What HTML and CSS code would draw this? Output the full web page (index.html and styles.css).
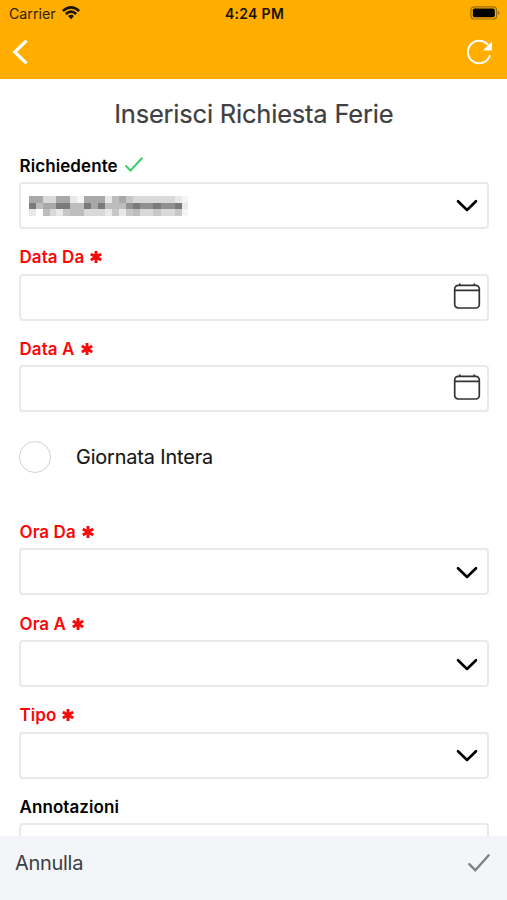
FILE: index.html
```
<!DOCTYPE html>
<html lang="it">
<head>
<meta charset="utf-8">
<title>Inserisci Richiesta Ferie</title>
<link rel="stylesheet" href="styles.css">
</head>
<body>
<svg class="defs" width="0" height="0" aria-hidden="true">
  <symbol id="star" viewBox="0 0 14 14"><path d="M7 1v12M1.8 4l10.4 6M12.2 4L1.8 10"/></symbol>
  <symbol id="chevron" viewBox="0 0 22 14"><path d="M2 2.2l9 8.8 9-8.8"/></symbol>
  <symbol id="calendar" viewBox="0 0 28 28"><rect x="1.7" y="3.3" width="24.6" height="22.7" rx="3.5"/><path d="M2 8.4h24M6.8 3V2M21.2 3V2"/></symbol>
</svg>
<div class="app">
  <header class="header">
    <div class="status">
      <div class="carrier"><span>Carrier</span>
        <svg width="18" height="14" viewBox="0 0 18 14"><path class="wifi" d="M.8 5Q9-2.2 17.2 5M3.8 8Q9 3.2 14.2 8"/><path d="M6 10Q9 7.4 12 10L9 13.2z"/></svg>
      </div>
      <div class="time">4:24 PM</div>
      <svg class="battery" width="30" height="14" viewBox="0 0 30 14"><rect class="shell" x="1" y=".8" width="25.6" height="12.2" rx="3.3"/><rect x="2.8" y="2.6" width="22" height="8.6" rx="1.6"/><path class="tip" d="M28 4.9q3 2 0 4z"/></svg>
    </div>
    <nav class="nav">
      <svg class="back" width="18" height="28" viewBox="0 0 18 28"><path d="M15.5 2.6L3.8 14 15.5 25.4"/></svg>
      <svg class="reload" width="28" height="28" viewBox="0 0 28 28"><path d="M25 17.3A11.3 11.3 0 1 1 23 6.9"/><path class="head" d="M27 3.3v9.2h-9z"/></svg>
    </nav>
  </header>
  <main class="form">
    <h1>Inserisci Richiesta Ferie</h1>
    <div class="field">
      <div class="label"><span>Richiedente</span><svg class="valid" width="20" height="18" viewBox="0 0 20 18"><path d="M1.5 9.5l5 5L18.3 1.8"/></svg></div>
      <div class="box">
        <svg class="masked" width="160" height="21" viewBox="87 154 480 63" preserveAspectRatio="none" shape-rendering="crispEdges">
          <path fill="#a8a8a8" d="M87 154h42v20h-42zM169 154h42v20h-42zM252 154h63v20h-63zM357 154h20v20h-20zM129 174h40v20h-40zM273 174h21v20h-21z"/>
          <path fill="#d9d9d9" d="M129 154h40v20h-40zM399 154h126v20h-126zM252 194h63v21h-63zM420 194h40v21h-40zM483 194h42v21h-42zM150 194h19v21h-19z"/>
          <path fill="#e8e8e8" d="M211 154h21v20h-21zM315 154h21v20h-21zM525 154h20v20h-20zM87 194h21v21h-21zM169 194h21v21h-21zM315 194h21v21h-21zM357 194h20v21h-20zM545 174h19v20h-19z"/>
          <path fill="#f5f5f5" d="M232 154h20v20h-20zM545 154h19v20h-19zM545 194h19v21h-19z"/>
          <path fill="#bdbdbd" d="M336 154h21v20h-21zM108 174h21v20h-21zM211 174h41v20h-41zM315 174h62v20h-62zM129 194h21v21h-21zM211 194h41v21h-41zM399 194h21v21h-21z"/>
          <path fill="#c8c8c8" d="M377 154h22v20h-22zM190 194h21v21h-21zM336 194h21v21h-21zM377 194h22v21h-22zM460 194h23v21h-23zM525 194h20v21h-20z"/>
          <path fill="#7a7a7a" d="M87 174h21v20h-21zM169 174h42v20h-42zM252 174h21v20h-21zM294 174h21v20h-21zM399 174h21v20h-21zM460 174h23v20h-23zM525 174h20v20h-20z"/>
          <path fill="#909090" d="M377 174h22v20h-22zM420 174h40v20h-40zM483 174h42v20h-42z"/>
        </svg>
        <svg class="chevron"><use href="#chevron"/></svg>
      </div>
    </div>
    <div class="field required">
      <div class="label"><span>Data Da</span><svg class="star"><use href="#star"/></svg></div>
      <div class="box"><svg class="calendar"><use href="#calendar"/></svg></div>
    </div>
    <div class="field required">
      <div class="label"><span>Data A</span><svg class="star"><use href="#star"/></svg></div>
      <div class="box"><svg class="calendar"><use href="#calendar"/></svg></div>
    </div>
    <div class="option"><i class="radio"></i><span>Giornata Intera</span></div>
    <div class="field required">
      <div class="label"><span>Ora Da</span><svg class="star"><use href="#star"/></svg></div>
      <div class="box"><svg class="chevron"><use href="#chevron"/></svg></div>
    </div>
    <div class="field required">
      <div class="label"><span>Ora A</span><svg class="star"><use href="#star"/></svg></div>
      <div class="box"><svg class="chevron"><use href="#chevron"/></svg></div>
    </div>
    <div class="field required">
      <div class="label"><span>Tipo</span><svg class="star"><use href="#star"/></svg></div>
      <div class="box"><svg class="chevron"><use href="#chevron"/></svg></div>
    </div>
    <div class="field">
      <div class="label"><span>Annotazioni</span></div>
      <div class="box"></div>
    </div>
  </main>
  <footer class="footer">
    <span>Annulla</span>
    <svg width="24" height="20" viewBox="0 0 24 20"><path d="M2.3 11.2l6 6L21.7 2.3"/></svg>
  </footer>
</div>
</body>
</html>
```
FILE: styles.css
```
* { box-sizing: border-box; }
body { margin: 0; background: #fff; font-family: Inter, "Liberation Sans", sans-serif; color: #000; }
svg { display: block; flex: none; }
.defs { position: absolute; }
.app { width: 507px; height: 900px; display: flex; flex-direction: column; overflow: hidden; }

.header { height: 79px; flex: none; background: #ffae00; }
.status { height: 27px; display: grid; grid-template-columns: 1fr auto 1fr; align-items: center; padding: 0 7px 0 9px; }
.carrier { display: flex; align-items: center; gap: 6px; font-size: 14.2px; color: #2d2205; }
.carrier svg { fill: #1a1300; margin-top: -2px; }
.wifi { fill: none; stroke: #1a1300; stroke-width: 2.6; }
.time { font-size: 14px; font-weight: 600; letter-spacing: .3px; color: #1a1300; }
.battery { justify-self: end; margin-top: -1px; }
.battery .shell { fill: none; stroke: #9c6c0c; stroke-width: 1.2; }
.battery .tip { fill: #9c6c0c; }
.nav { height: 50px; display: flex; align-items: center; justify-content: space-between; padding: 0 14px 0 11px; }
.nav svg { fill: none; stroke: #fff; }
.back { stroke-width: 3.2; }
.reload { stroke-width: 2; }
.nav .head { fill: #fff; stroke: none; }

.form { flex: 1; min-height: 0; overflow: hidden; padding: 0 18.5px 0 19px; }
h1 { margin: 17px 0 21.5px; height: 36px; line-height: 36px; font-size: 25.5px; font-weight: 400; letter-spacing: -.21px; text-align: center; color: #404042; -webkit-text-stroke: .2px #404042; }
.field { height: 91.65px; }
.label { height: 24px; display: flex; align-items: center; gap: 5px; padding-left: .5px; font-size: 17px; font-weight: 600; letter-spacing: .08px; }
.required .label { color: #fa0808; }
.star { width: 14px; height: 14px; stroke: #fa0808; stroke-width: 2.9; }
.valid { fill: none; stroke: #35d06c; stroke-width: 2; margin: -2px 0 0 1px; }
.box { height: 47px; margin-top: 4.4px; display: flex; align-items: center; border: 2px solid #e9e9e9; border-radius: 4px; padding: 0 6px 0 8px; }
.masked { margin-top: 2px; filter: blur(.4px); }
.chevron { width: 22px; height: 14px; margin: 2px 3px 0 auto; fill: none; stroke: #000; stroke-width: 2.6; stroke-linecap: round; stroke-linejoin: round; }
.calendar { width: 28px; height: 28px; margin: -3px 0 0 auto; fill: none; stroke: #333; stroke-width: 1.7; stroke-linecap: round; }
.option { height: 91.65px; display: flex; align-items: flex-start; gap: 25px; font-size: 19.8px; letter-spacing: -.1px; line-height: 32px; color: #151515; }
.radio { width: 32px; height: 32px; border: 1.5px solid #d2d2d2; border-radius: 50%; margin-top: 12.5px; }
.option span { margin-top: 12.5px; -webkit-text-stroke: .15px #151515; }

.footer { height: 64px; flex: none; display: flex; align-items: flex-start; justify-content: space-between; padding: 12px 16px 0 15px; background: #f3f5f9; font-size: 20px; letter-spacing: -.3px; line-height: 30px; color: #3e4043; }
.footer svg { margin-top: 5px; fill: none; stroke: #808185; stroke-width: 2.4; stroke-linecap: round; }
```
